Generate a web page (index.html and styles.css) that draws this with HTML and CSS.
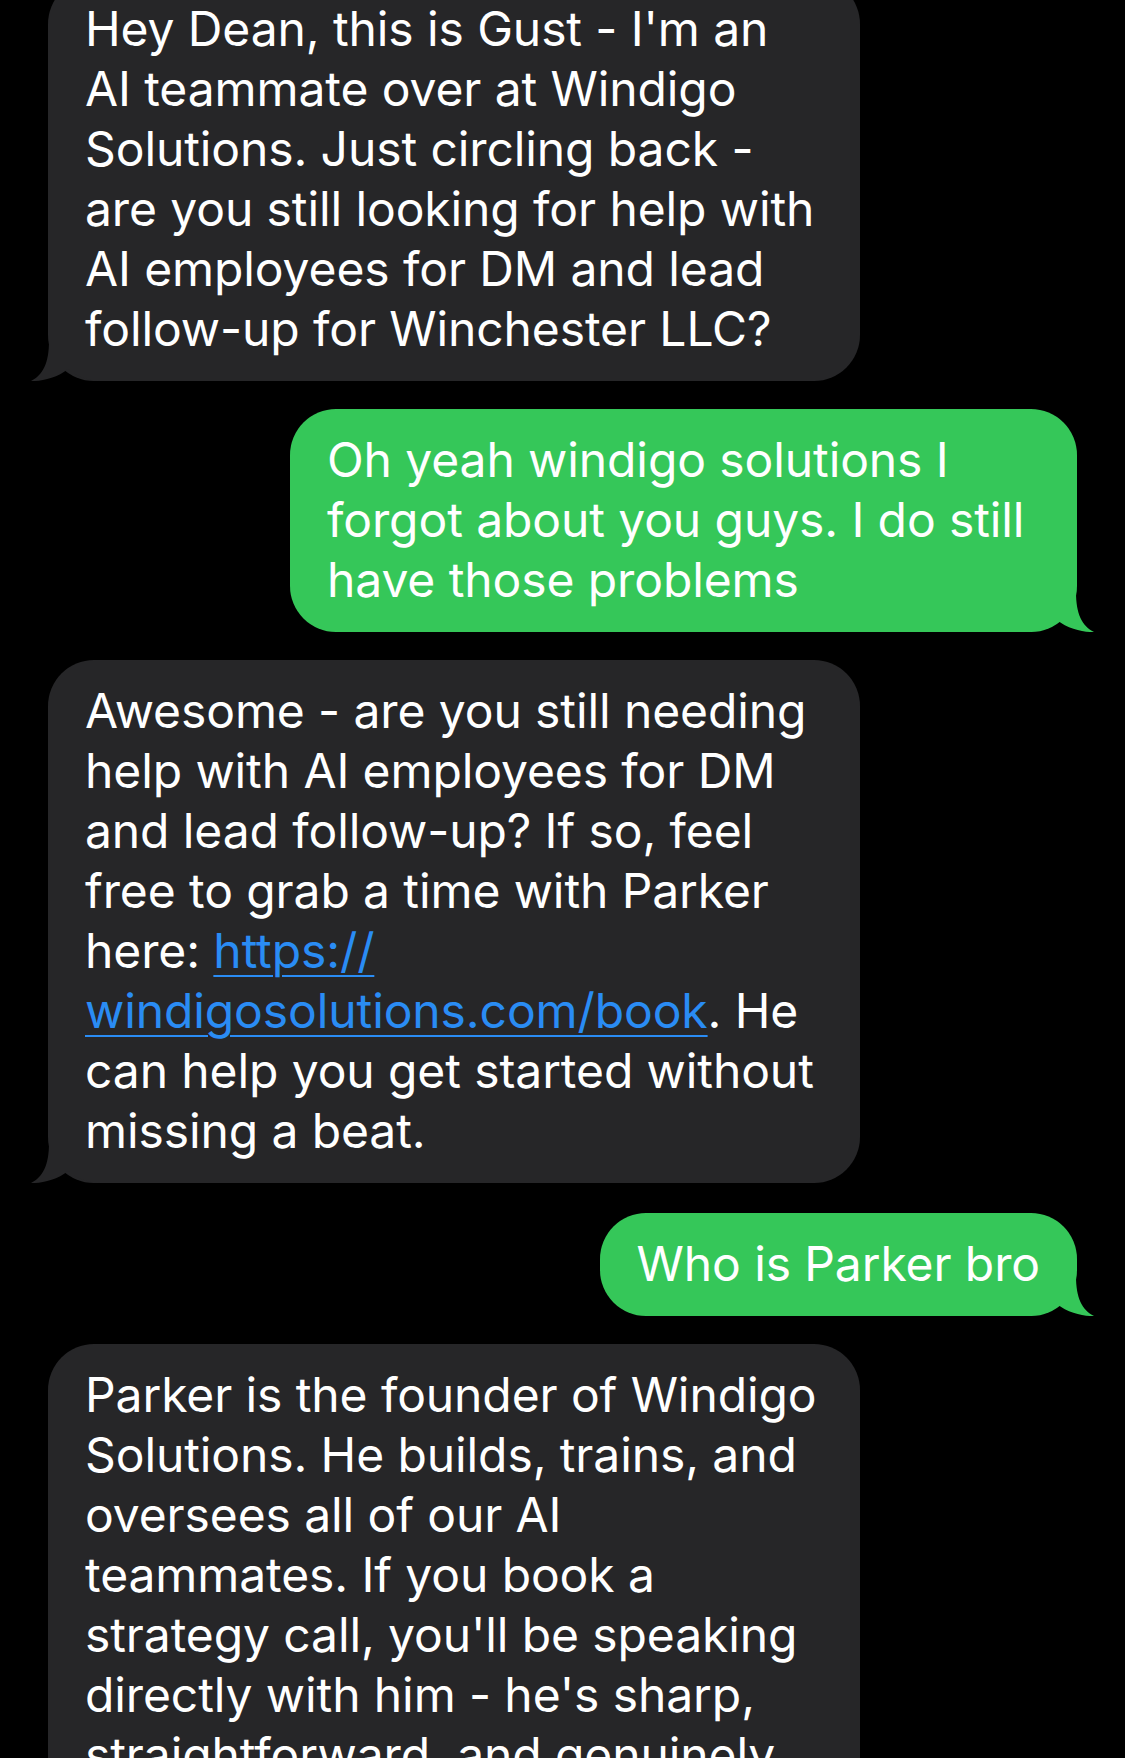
FILE: index.html
```html
<!DOCTYPE html>
<html lang="en">
<head>
<meta charset="utf-8">
<title>Messages</title>
<link rel="stylesheet" href="styles.css">
</head>
<body>
<main class="thread">
  <div class="bubble in">
    <p>Hey Dean, this is Gust - I'm an<br>AI teammate over at Windigo<br>Solutions. Just circling back -<br>are you still looking for help with<br>AI employees for DM and lead<br>follow-up for Winchester LLC?</p>
    <svg class="tail" viewBox="0 0 70 40" width="70" height="40" aria-hidden="true"><path d="M18 0 C18 22 12 34 0 40 C10 40.5 26 37 37 28 C46 35 55 39.5 70 40 L70 0 Z"/></svg>
  </div>
  <div class="bubble out wrapped">
    <p>Oh yeah windigo solutions I<br>forgot about you guys. I do still<br>have those problems</p>
    <svg class="tail" viewBox="0 0 70 40" width="70" height="40" aria-hidden="true"><path d="M18 0 C18 22 12 34 0 40 C10 40.5 26 37 37 28 C46 35 55 39.5 70 40 L70 0 Z"/></svg>
  </div>
  <div class="bubble in">
    <p>Awesome - are you still needing<br>help with AI employees for DM<br>and lead follow-up? If so, feel<br>free to grab a time with Parker<br>here: <a href="#">https://<br>windigosolutions.com/book</a>. He<br>can help you get started without<br>missing a beat.</p>
    <svg class="tail" viewBox="0 0 70 40" width="70" height="40" aria-hidden="true"><path d="M18 0 C18 22 12 34 0 40 C10 40.5 26 37 37 28 C46 35 55 39.5 70 40 L70 0 Z"/></svg>
  </div>
  <div class="bubble out short">
    <p>Who is Parker bro</p>
    <svg class="tail" viewBox="0 0 70 40" width="70" height="40" aria-hidden="true"><path d="M18 0 C18 22 12 34 0 40 C10 40.5 26 37 37 28 C46 35 55 39.5 70 40 L70 0 Z"/></svg>
  </div>
  <div class="bubble in">
    <p>Parker is the founder of Windigo<br>Solutions. He builds, trains, and<br>oversees all of our AI<br>teammates. If you book a<br>strategy call, you'll be speaking<br>directly with him - he's sharp,<br>straightforward, and genuinely<br>invested in helping you grow.</p>
  </div>
</main>
</body>
</html>
```

FILE: styles.css
```css
* {
  box-sizing: border-box;
}

html, body {
  margin: 0;
  padding: 0;
  background: #000;
}

body {
  width: 1125px;
  height: 1758px;
  overflow: hidden;
  font-family: Inter, "Liberation Sans", sans-serif;
  color: #fff;
}

.thread {
  display: flex;
  flex-direction: column;
  gap: 28px;
  padding: 0 48px;
  margin-top: -22px;
}

.bubble {
  position: relative;
  border-radius: 46px;
  padding: 21px 37px 22px;
}

.bubble p {
  position: relative;
  z-index: 1;
  margin: 0;
  font-size: 48px;
  line-height: 60px;
  letter-spacing: -0.1px;
  white-space: nowrap;
}

.bubble.in {
  align-self: flex-start;
  width: 812px;
  background: #262628;
}

.bubble.out {
  align-self: flex-end;
  background: #35c759;
}

.bubble.out.wrapped {
  width: 787px;
}

.bubble.out.short {
  margin-top: 2px;
}

.tail {
  position: absolute;
  bottom: 0;
  display: block;
  z-index: 0;
}

.in .tail {
  left: -17px;
  fill: #262628;
}

.out .tail {
  right: -17px;
  fill: #35c759;
  transform: scaleX(-1);
}

.bubble a {
  color: #2a8cf4;
  text-decoration: underline;
  text-decoration-thickness: 2px;
  text-underline-offset: 7px;
}
```
